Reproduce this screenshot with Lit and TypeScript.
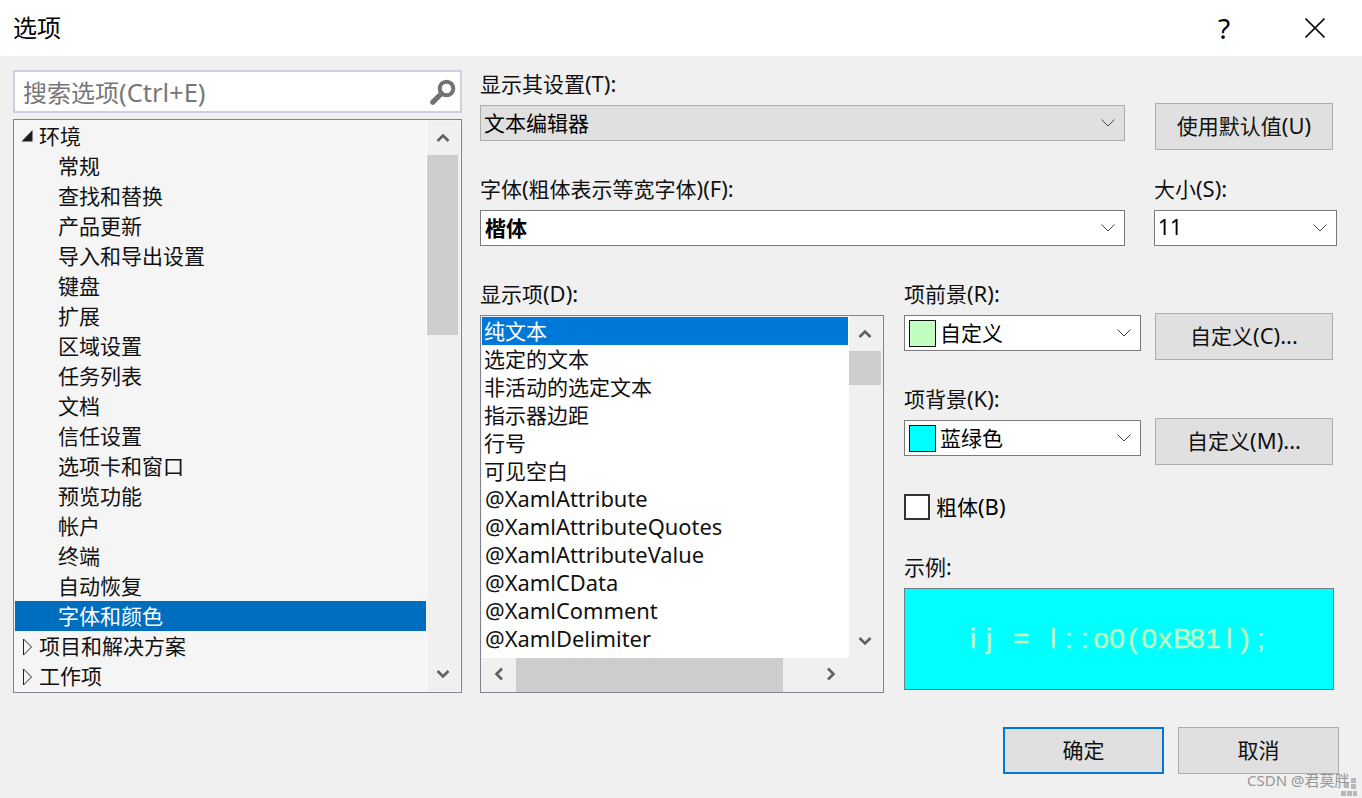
import { LitElement, html, css } from "lit";
import { customElement } from "lit/decorators.js";

const chevThin = html`<svg class="cv" width="14" height="8" viewBox="0 0 14 8"><path d="M0.5 0.5 L7 7 L13.5 0.5" fill="none" stroke="#444" stroke-width="1"/></svg>`;
const bold = (d: string) => html`<svg width="14" height="14" viewBox="0 0 14 14"><path d="${d}" fill="none" stroke="#606060" stroke-width="2.6"/></svg>`;
const up = bold("M1.5 10 L7 4.5 L12.5 10");
const down = bold("M1.5 4 L7 9.5 L12.5 4");
const left = bold("M10 1.5 L4.5 7 L10 12.5");
const right = bold("M4 1.5 L9.5 7 L4 12.5");
const en = (s: string) => html`<span class="en">${s}</span>`;

const tree = ["常规","查找和替换","产品更新","导入和导出设置","键盘","扩展","区域设置","任务列表","文档","信任设置","选项卡和窗口","预览功能","帐户","终端","自动恢复","字体和颜色"];
const items = ["纯文本","选定的文本","非活动的选定文本","指示器边距","行号","可见空白","@XamlAttribute","@XamlAttributeQuotes","@XamlAttributeValue","@XamlCData","@XamlComment","@XamlDelimiter"];
const sample = "ij = l::o0(0xB81l);";

@customElement("app-root")
export class AppRoot extends LitElement {
  static styles = css`
    :host { display:block; width:1362px; height:798px; background:#f0f0f0; overflow:hidden; position:relative;
      font-family:"Noto Sans","Noto Sans CJK SC",sans-serif; font-size:21px; color:#000; }
    * { box-sizing:border-box; }
    .en { font-size:22px; line-height:20px; }
    .title { height:56px; background:#fff; display:flex; align-items:center; padding-left:13px; font-size:24px; line-height:54px; }
    .title .sp { flex:1; }
    .help { font-size:28px; width:20px; text-align:center; margin-right:71px; }
    .close { margin-right:37px; display:block; }
    .main { display:flex; padding:14px 0 0 13px; }
    .leftcol { width:449px; }
    .search { height:43px; border:2px solid #ccd0e0; background:#fff; display:flex; align-items:center; justify-content:space-between; padding:0 4px 0 8px; font-size:24px; color:#777; }
    .search .en { font-size:25.5px; line-height:24px; }
    .tree { margin-top:6px; height:574px; border:1px solid #82858f; background:#f5f5f5; padding:1px; display:flex; }
    .tree-rows { width:411px; }
    .trow { height:30px; line-height:30px; padding-left:43px; white-space:nowrap; color:#111; }
    .trow.top { padding-left:24px; position:relative; display:flex; }
    .exp { width:0; position:relative; }
    .exp svg { position:absolute; left:-18px; top:7px; }
    .trow.sel { background:#006ebf; color:#fff; }
    .vbar { background:#f0f0f0; display:flex; flex-direction:column; align-items:stretch; }
    .tree .vbar { width:34px; border-left:1px solid #fff; padding-right:2px; }
    .btn-s { display:flex; align-items:center; justify-content:center; flex:none; }
    .tree .up { height:34px; }
    .tree .thumb { height:180px; background:#cdcdcd; flex:none; }
    .grow { flex:1; }
    .tree .dn { height:34px; }
    .rightcol { margin-left:18px; width:859px; padding-top:2px; }
    .lbl { height:26px; line-height:24px; white-space:nowrap; color:#111; }
    .sel-box { height:36px; margin-top:7px; border:1px solid #7a7a7a; background:#fff; display:flex; align-items:center; padding-left:3px; padding-bottom:2px; white-space:nowrap; position:relative; }
    .sel-box b { margin-left:1px; }
    .sel-box .cv { margin-left:auto; margin-right:9px; margin-top:2px; }
    .sel-box.dis { background:#e0e0e0; border-color:#adadad; }
    .btn { height:47px; width:178px; border:1px solid #adadad; background:#e0e0e0; display:flex; align-items:center; justify-content:center; white-space:nowrap; color:#111; padding-bottom:3px; }
    .row { display:flex; }
    .w645 { width:645px; }
    .r1btn { margin:31px 0 0 30px; }
    .r2 { margin-top:27px; }
    .size { width:183px; margin-left:29px; }
    .r3 { margin-top:36px; }
    .w404 { width:404px; }
    .list { margin-top:7px; height:378px; border:1px solid #82858f; background:#f0f0f0; padding:1px; display:grid; grid-template-columns:367px 33px; grid-template-rows:341px 32px; }
    .list-rows { background:#fff; overflow:hidden; }
    .lrow { height:28px; line-height:28px; padding-left:2px; white-space:nowrap; width:366px; color:#111; }
    .lrow.at { font-size:21.9px; padding-left:3px; }
    .lrow.sel { background:#0078d7; color:#fff; }
    .list .vbar { padding-right:1px; }
    .list .up { height:34px; }
    .list .thumb { height:34px; background:#cdcdcd; flex:none; }
    .list .dn { height:34px; }
    .hbar { grid-column:1 / 3; display:flex; align-items:stretch; }
    .hbar .l { width:34px; }
    .hbar .thumb { width:267px; background:#cdcdcd; flex:none; }
    .hbar .r { width:34px; margin-left:auto; margin-right:34px; }
    .rt { margin-left:20px; width:435px; }
    .colorrow { display:flex; align-items:flex-start; }
    .colorsel { width:237px; flex:none; padding-left:4px; padding-bottom:0; }
    .colorsel .txt { position:relative; top:-1px; }
    .colorsel .cv { margin-right:9px; margin-top:0; }
    .colorrow .btn { margin:5px 0 0 14px; }
    .swatch { width:27px; height:27px; border:1px solid #111; flex:none; margin-right:4px; }
    .lbl2 { margin-top:27px; }
    .chk { margin-top:29px; display:flex; align-items:center; height:26px; line-height:24px; }
    .box { width:26px; height:26px; border:2px solid #333; background:#fff; margin-right:6px; flex:none; }
    .lbl3 { margin-top:35px; }
    .sample { margin-top:7px; width:430px; height:102px; background:#0ff; border:1px solid #6f7f80; display:flex; align-items:center; justify-content:center; padding-right:4px;
      color:#c0ffc0; font-family:"Liberation Sans",sans-serif; font-size:28px; -webkit-text-stroke:0.4px #c0ffc0; }
    .ch { width:16px; text-align:center; flex:none; white-space:pre; }
    .foot { display:flex; justify-content:flex-end; margin-top:34px; padding-right:23px; gap:14px; }
    .foot .btn { width:161px; }
    .foot .btn.def { border:2px solid #0078d7; }
    .mark { position:absolute; left:1247px; top:769px; font-size:15px; line-height:22px; color:#8d8d8d; opacity:.9; white-space:nowrap; }
    .dots { position:absolute; left:1341px; top:778px; }
  `;

  render() {
    return html`
      <div class="title"><span>选项</span><span class="sp"></span><span class="help">?</span>
        <svg class="close" width="20" height="20" viewBox="0 0 20 20"><path d="M0.5 0.5 L19.5 19.5 M19.5 0.5 L0.5 19.5" stroke="#111" stroke-width="1.6" fill="none"/></svg>
      </div>
      <div class="main">
        <div class="leftcol">
          <div class="search"><span>搜索选项${en("(Ctrl+E)")}</span>
            <svg width="26" height="26" viewBox="0 0 26 26"><circle cx="16.5" cy="9.5" r="6.8" fill="none" stroke="#727272" stroke-width="4"/><path d="M11.5 14.5 L2.8 23.2" stroke="#727272" stroke-width="5.2" stroke-linecap="round"/></svg>
          </div>
          <div class="tree">
            <div class="tree-rows">
              <div class="trow top"><span class="exp"><svg width="12" height="14" viewBox="0 0 12 14"><path d="M0.5 13.5 L11.5 13.5 L11.5 2 Z" fill="#1e1e1e"/></svg></span>环境</div>
              ${tree.map((t, i) => html`<div class="trow ${i === tree.length - 1 ? "sel" : ""}">${t}</div>`)}
              <div class="trow top"><span class="exp"><svg width="12" height="18" viewBox="0 0 12 18"><path d="M2.5 1 L10.5 9 L2.5 17 Z" fill="none" stroke="#222" stroke-width="1"/></svg></span>项目和解决方案</div>
              <div class="trow top"><span class="exp"><svg width="12" height="18" viewBox="0 0 12 18"><path d="M2.5 1 L10.5 9 L2.5 17 Z" fill="none" stroke="#222" stroke-width="1"/></svg></span>工作项</div>
            </div>
            <div class="vbar">
              <div class="btn-s up">${up}</div><div class="thumb"></div><div class="grow"></div><div class="btn-s dn">${down}</div>
            </div>
          </div>
        </div>
        <div class="rightcol">
          <div class="row">
            <div class="w645"><div class="lbl">显示其设置${en("(T):")}</div><div class="sel-box dis">文本编辑器${chevThin}</div></div>
            <div class="btn r1btn"><span>使用默认值${en("(U)")}</span></div>
          </div>
          <div class="row r2">
            <div class="w645"><div class="lbl">字体${en("(")}粗体表示等宽字体${en(")(F):")}</div><div class="sel-box"><b>楷体</b>${chevThin}</div></div>
            <div class="size"><div class="lbl">大小${en("(S):")}</div><div class="sel-box">11${chevThin}</div></div>
          </div>
          <div class="row r3">
            <div class="w404">
              <div class="lbl">显示项${en("(D):")}</div>
              <div class="list">
                <div class="list-rows">${items.map((t, i) => html`<div class="lrow ${i === 0 ? "sel" : ""} ${t[0] === "@" ? "at" : ""}">${t}</div>`)}</div>
                <div class="vbar"><div class="btn-s up">${up}</div><div class="thumb"></div><div class="grow"></div><div class="btn-s dn">${down}</div></div>
                <div class="hbar"><div class="btn-s l">${left}</div><div class="thumb"></div><div class="btn-s r">${right}</div></div>
              </div>
            </div>
            <div class="rt">
              <div class="lbl">项前景${en("(R):")}</div>
              <div class="colorrow">
                <div class="sel-box colorsel"><span class="swatch" style="background:#c0ffc0"></span><span class="txt">自定义</span>${chevThin}</div>
                <div class="btn"><span>自定义${en("(C)...")}</span></div>
              </div>
              <div class="lbl lbl2">项背景${en("(K):")}</div>
              <div class="colorrow">
                <div class="sel-box colorsel"><span class="swatch" style="background:#00ffff"></span><span class="txt">蓝绿色</span>${chevThin}</div>
                <div class="btn"><span>自定义${en("(M)...")}</span></div>
              </div>
              <div class="chk"><span class="box"></span><span>粗体${en("(B)")}</span></div>
              <div class="lbl lbl3">示例:</div>
              <div class="sample">${[...sample].map((c) => html`<span class="ch">${c}</span>`)}</div>
            </div>
          </div>
        </div>
      </div>
      <div class="foot"><div class="btn def">确定</div><div class="btn">取消</div></div>
      <div class="mark">CSDN @君莫胖</div>
      <svg class="dots" width="16" height="18" viewBox="0 0 16 18"><g fill="#b8b8b8">
        <rect x="10" y="0" width="5" height="5"/><rect x="3" y="5" width="5" height="5"/><rect x="10" y="6" width="5" height="5"/><rect x="0" y="13" width="5" height="5"/><rect x="6" y="13" width="5" height="5"/><rect x="12" y="13" width="4" height="5"/></g></svg>
    `;
  }
}
